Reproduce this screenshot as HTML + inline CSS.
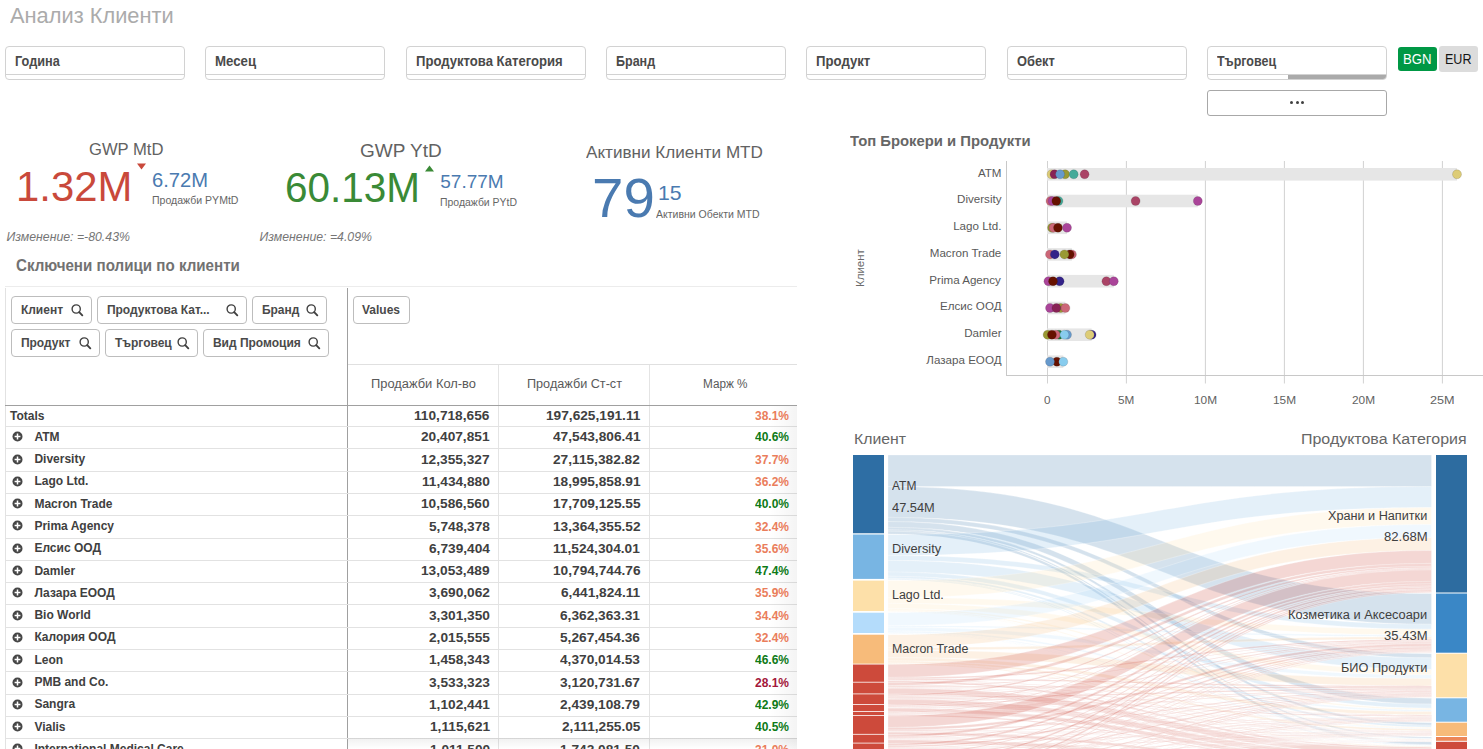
<!DOCTYPE html>
<html><head><meta charset="utf-8"><style>
html,body{margin:0;padding:0;}
body{width:1483px;height:749px;overflow:hidden;background:#fff;position:relative;font-family:"Liberation Sans",sans-serif;}
.b{position:absolute;}
.t{position:absolute;white-space:pre;line-height:1;transform-origin:0 0;}
</style></head><body>
<div class="b" style="left:5px;top:46px;width:180px;height:34px;border:1px solid #d2d2d2;border-radius:4px;box-sizing:border-box;background:#fff"></div>
<div class="b" style="left:6px;top:74px;width:178px;height:1px;background:#d2d2d2"></div>
<div class="b" style="left:205px;top:46px;width:180px;height:34px;border:1px solid #d2d2d2;border-radius:4px;box-sizing:border-box;background:#fff"></div>
<div class="b" style="left:206px;top:74px;width:178px;height:1px;background:#d2d2d2"></div>
<div class="b" style="left:406px;top:46px;width:180px;height:34px;border:1px solid #d2d2d2;border-radius:4px;box-sizing:border-box;background:#fff"></div>
<div class="b" style="left:407px;top:74px;width:178px;height:1px;background:#d2d2d2"></div>
<div class="b" style="left:606px;top:46px;width:180px;height:34px;border:1px solid #d2d2d2;border-radius:4px;box-sizing:border-box;background:#fff"></div>
<div class="b" style="left:607px;top:74px;width:178px;height:1px;background:#d2d2d2"></div>
<div class="b" style="left:806px;top:46px;width:180px;height:34px;border:1px solid #d2d2d2;border-radius:4px;box-sizing:border-box;background:#fff"></div>
<div class="b" style="left:807px;top:74px;width:178px;height:1px;background:#d2d2d2"></div>
<div class="b" style="left:1007px;top:46px;width:180px;height:34px;border:1px solid #d2d2d2;border-radius:4px;box-sizing:border-box;background:#fff"></div>
<div class="b" style="left:1008px;top:74px;width:178px;height:1px;background:#d2d2d2"></div>
<div class="b" style="left:1207px;top:46px;width:180px;height:34px;border:1px solid #d2d2d2;border-radius:4px;box-sizing:border-box;background:#fff"></div>
<div class="b" style="left:1208px;top:74px;width:178px;height:1px;background:#d2d2d2"></div>
<div class="b" style="left:1288px;top:75px;width:98px;height:3.5px;background:#aaaaaa;border-bottom-right-radius:3px"></div>
<div class="b" style="left:1207px;top:90px;width:180px;height:26px;border:1px solid #a8a8a8;border-radius:3px;box-sizing:border-box"></div>
<div class="b" style="left:1290.0px;top:100.5px;width:3px;height:3px;background:#404040;border-radius:50%"></div>
<div class="b" style="left:1295.7px;top:100.5px;width:3px;height:3px;background:#404040;border-radius:50%"></div>
<div class="b" style="left:1301.4px;top:100.5px;width:3px;height:3px;background:#404040;border-radius:50%"></div>
<div class="b" style="left:1398px;top:47px;width:39px;height:24px;background:#009845;border-radius:3px"></div>
<div class="b" style="left:1439px;top:46px;width:39px;height:26px;background:#dcdcdc;border-radius:3px"></div>
<svg class="b" style="left:136px;top:163px" width="11" height="7"><path d="M1,0.5 L10,0.5 L5.5,6.5 Z" fill="#c9493b"/></svg>
<svg class="b" style="left:424px;top:165px" width="11" height="7"><path d="M1,6.5 L10,6.5 L5.5,0.5 Z" fill="#3a8a36"/></svg>
<div class="b" style="left:5px;top:286px;width:792px;height:1px;background:#ececec"></div>
<div class="b" style="left:5px;top:288px;width:1px;height:461px;background:#e2e2e2"></div>
<div class="b" style="left:347px;top:288px;width:1px;height:461px;background:#a0a0a0"></div>
<div class="b" style="left:348px;top:364px;width:449px;height:1px;background:#e0e0e0"></div>
<div class="b" style="left:498px;top:365px;width:1px;height:384px;background:#e4e4e4"></div>
<div class="b" style="left:649px;top:365px;width:1px;height:384px;background:#e4e4e4"></div>
<div class="b" style="left:5px;top:404.5px;width:792px;height:1.5px;background:#a0a0a0"></div>
<div class="b" style="left:11px;top:296px;width:81px;height:28px;border:1px solid #bdbdbd;border-radius:4px;box-sizing:border-box"></div>
<svg class="b" style="left:71.2px;top:304px" width="14" height="14"><circle cx="5.2" cy="5" r="4.1" fill="none" stroke="#404040" stroke-width="1.4"/><path d="M8.2,8.2 L11.3,11.3" stroke="#404040" stroke-width="1.9" stroke-linecap="round"/></svg>
<div class="b" style="left:97px;top:296px;width:150px;height:28px;border:1px solid #bdbdbd;border-radius:4px;box-sizing:border-box"></div>
<svg class="b" style="left:226.2px;top:304px" width="14" height="14"><circle cx="5.2" cy="5" r="4.1" fill="none" stroke="#404040" stroke-width="1.4"/><path d="M8.2,8.2 L11.3,11.3" stroke="#404040" stroke-width="1.9" stroke-linecap="round"/></svg>
<div class="b" style="left:252px;top:296px;width:75px;height:28px;border:1px solid #bdbdbd;border-radius:4px;box-sizing:border-box"></div>
<svg class="b" style="left:306.2px;top:304px" width="14" height="14"><circle cx="5.2" cy="5" r="4.1" fill="none" stroke="#404040" stroke-width="1.4"/><path d="M8.2,8.2 L11.3,11.3" stroke="#404040" stroke-width="1.9" stroke-linecap="round"/></svg>
<div class="b" style="left:11px;top:329px;width:89px;height:28px;border:1px solid #bdbdbd;border-radius:4px;box-sizing:border-box"></div>
<svg class="b" style="left:79.2px;top:337px" width="14" height="14"><circle cx="5.2" cy="5" r="4.1" fill="none" stroke="#404040" stroke-width="1.4"/><path d="M8.2,8.2 L11.3,11.3" stroke="#404040" stroke-width="1.9" stroke-linecap="round"/></svg>
<div class="b" style="left:105px;top:329px;width:93px;height:28px;border:1px solid #bdbdbd;border-radius:4px;box-sizing:border-box"></div>
<svg class="b" style="left:177.2px;top:337px" width="14" height="14"><circle cx="5.2" cy="5" r="4.1" fill="none" stroke="#404040" stroke-width="1.4"/><path d="M8.2,8.2 L11.3,11.3" stroke="#404040" stroke-width="1.9" stroke-linecap="round"/></svg>
<div class="b" style="left:203px;top:329px;width:126px;height:28px;border:1px solid #bdbdbd;border-radius:4px;box-sizing:border-box"></div>
<svg class="b" style="left:308.2px;top:337px" width="14" height="14"><circle cx="5.2" cy="5" r="4.1" fill="none" stroke="#404040" stroke-width="1.4"/><path d="M8.2,8.2 L11.3,11.3" stroke="#404040" stroke-width="1.9" stroke-linecap="round"/></svg>
<div class="b" style="left:353px;top:296px;width:57px;height:28px;border:1px solid #bdbdbd;border-radius:4px;box-sizing:border-box"></div>
<div class="b" style="left:5px;top:426px;width:792px;height:1px;background:#e2e2e2"></div>
<div class="b" style="left:5px;top:448px;width:792px;height:1px;background:#e2e2e2"></div>
<svg class="b" style="left:12px;top:431.25px" width="11" height="11"><circle cx="5.5" cy="5.5" r="5" fill="#464646"/><path d="M5.5,2.6 V8.4 M2.6,5.5 H8.4" stroke="#fff" stroke-width="1.5"/></svg>
<div class="b" style="left:5px;top:471px;width:792px;height:1px;background:#e2e2e2"></div>
<svg class="b" style="left:12px;top:453.55px" width="11" height="11"><circle cx="5.5" cy="5.5" r="5" fill="#464646"/><path d="M5.5,2.6 V8.4 M2.6,5.5 H8.4" stroke="#fff" stroke-width="1.5"/></svg>
<div class="b" style="left:5px;top:493px;width:792px;height:1px;background:#e2e2e2"></div>
<svg class="b" style="left:12px;top:475.85px" width="11" height="11"><circle cx="5.5" cy="5.5" r="5" fill="#464646"/><path d="M5.5,2.6 V8.4 M2.6,5.5 H8.4" stroke="#fff" stroke-width="1.5"/></svg>
<div class="b" style="left:5px;top:515px;width:792px;height:1px;background:#e2e2e2"></div>
<svg class="b" style="left:12px;top:498.15px" width="11" height="11"><circle cx="5.5" cy="5.5" r="5" fill="#464646"/><path d="M5.5,2.6 V8.4 M2.6,5.5 H8.4" stroke="#fff" stroke-width="1.5"/></svg>
<div class="b" style="left:5px;top:538px;width:792px;height:1px;background:#e2e2e2"></div>
<svg class="b" style="left:12px;top:520.45px" width="11" height="11"><circle cx="5.5" cy="5.5" r="5" fill="#464646"/><path d="M5.5,2.6 V8.4 M2.6,5.5 H8.4" stroke="#fff" stroke-width="1.5"/></svg>
<div class="b" style="left:5px;top:560px;width:792px;height:1px;background:#e2e2e2"></div>
<svg class="b" style="left:12px;top:542.75px" width="11" height="11"><circle cx="5.5" cy="5.5" r="5" fill="#464646"/><path d="M5.5,2.6 V8.4 M2.6,5.5 H8.4" stroke="#fff" stroke-width="1.5"/></svg>
<div class="b" style="left:5px;top:582px;width:792px;height:1px;background:#e2e2e2"></div>
<svg class="b" style="left:12px;top:565.05px" width="11" height="11"><circle cx="5.5" cy="5.5" r="5" fill="#464646"/><path d="M5.5,2.6 V8.4 M2.6,5.5 H8.4" stroke="#fff" stroke-width="1.5"/></svg>
<div class="b" style="left:5px;top:604px;width:792px;height:1px;background:#e2e2e2"></div>
<svg class="b" style="left:12px;top:587.35px" width="11" height="11"><circle cx="5.5" cy="5.5" r="5" fill="#464646"/><path d="M5.5,2.6 V8.4 M2.6,5.5 H8.4" stroke="#fff" stroke-width="1.5"/></svg>
<div class="b" style="left:5px;top:627px;width:792px;height:1px;background:#e2e2e2"></div>
<svg class="b" style="left:12px;top:609.65px" width="11" height="11"><circle cx="5.5" cy="5.5" r="5" fill="#464646"/><path d="M5.5,2.6 V8.4 M2.6,5.5 H8.4" stroke="#fff" stroke-width="1.5"/></svg>
<div class="b" style="left:5px;top:649px;width:792px;height:1px;background:#e2e2e2"></div>
<svg class="b" style="left:12px;top:631.95px" width="11" height="11"><circle cx="5.5" cy="5.5" r="5" fill="#464646"/><path d="M5.5,2.6 V8.4 M2.6,5.5 H8.4" stroke="#fff" stroke-width="1.5"/></svg>
<div class="b" style="left:5px;top:671px;width:792px;height:1px;background:#e2e2e2"></div>
<svg class="b" style="left:12px;top:654.25px" width="11" height="11"><circle cx="5.5" cy="5.5" r="5" fill="#464646"/><path d="M5.5,2.6 V8.4 M2.6,5.5 H8.4" stroke="#fff" stroke-width="1.5"/></svg>
<div class="b" style="left:5px;top:694px;width:792px;height:1px;background:#e2e2e2"></div>
<svg class="b" style="left:12px;top:676.55px" width="11" height="11"><circle cx="5.5" cy="5.5" r="5" fill="#464646"/><path d="M5.5,2.6 V8.4 M2.6,5.5 H8.4" stroke="#fff" stroke-width="1.5"/></svg>
<div class="b" style="left:5px;top:716px;width:792px;height:1px;background:#e2e2e2"></div>
<svg class="b" style="left:12px;top:698.85px" width="11" height="11"><circle cx="5.5" cy="5.5" r="5" fill="#464646"/><path d="M5.5,2.6 V8.4 M2.6,5.5 H8.4" stroke="#fff" stroke-width="1.5"/></svg>
<div class="b" style="left:5px;top:738px;width:792px;height:1px;background:#e2e2e2"></div>
<svg class="b" style="left:12px;top:721.15px" width="11" height="11"><circle cx="5.5" cy="5.5" r="5" fill="#464646"/><path d="M5.5,2.6 V8.4 M2.6,5.5 H8.4" stroke="#fff" stroke-width="1.5"/></svg>
<svg class="b" style="left:12px;top:743.45px" width="11" height="11"><circle cx="5.5" cy="5.5" r="5" fill="#464646"/><path d="M5.5,2.6 V8.4 M2.6,5.5 H8.4" stroke="#fff" stroke-width="1.5"/></svg>
<div class="b" style="left:770px;top:406px;width:27px;height:343px;background:linear-gradient(to right,rgba(0,0,0,0),rgba(0,0,0,0.045))"></div>
<div class="b" style="left:348px;top:738px;width:449px;height:11px;background:linear-gradient(to bottom,rgba(0,0,0,0.06),rgba(0,0,0,0.0))"></div>
<svg class="b" style="left:0;top:0" width="1483" height="749">
<path d="M888,455.00 C1159.75,455.00 1159.75,455.00 1431.5,455.00 L1431.5,486.60 C1159.75,486.60 1159.75,486.60 888,486.60 Z" fill="#2e6ea4" fill-opacity="0.2" stroke="#fff" stroke-opacity="0.45" stroke-width="0.6"/>
<path d="M888,486.60 C1159.75,486.60 1159.75,593.50 1431.5,593.50 L1431.5,624.27 C1159.75,624.27 1159.75,517.36 888,517.36 Z" fill="#2e6ea4" fill-opacity="0.2" stroke="#fff" stroke-opacity="0.45" stroke-width="0.6"/>
<path d="M888,517.36 C1159.75,517.36 1159.75,653.70 1431.5,653.70 L1431.5,657.86 C1159.75,657.86 1159.75,521.52 888,521.52 Z" fill="#2e6ea4" fill-opacity="0.2" stroke="#fff" stroke-opacity="0.45" stroke-width="0.6"/>
<path d="M888,521.52 C1159.75,521.52 1159.75,698.30 1431.5,698.30 L1431.5,704.12 C1159.75,704.12 1159.75,527.34 888,527.34 Z" fill="#2e6ea4" fill-opacity="0.2" stroke="#fff" stroke-opacity="0.45" stroke-width="0.6"/>
<path d="M888,527.34 C1159.75,527.34 1159.75,722.70 1431.5,722.70 L1431.5,725.19 C1159.75,725.19 1159.75,529.84 888,529.84 Z" fill="#2e6ea4" fill-opacity="0.2" stroke="#fff" stroke-opacity="0.45" stroke-width="0.6"/>
<path d="M888,529.84 C1159.75,529.84 1159.75,737.00 1431.5,737.00 L1431.5,738.33 C1159.75,738.33 1159.75,531.17 888,531.17 Z" fill="#2e6ea4" fill-opacity="0.2" stroke="#fff" stroke-opacity="0.45" stroke-width="0.6"/>
<path d="M888,531.17 C1159.75,531.17 1159.75,741.80 1431.5,741.80 L1431.5,744.69 C1159.75,744.69 1159.75,534.06 888,534.06 Z" fill="#2e6ea4" fill-opacity="0.2" stroke="#fff" stroke-opacity="0.45" stroke-width="0.6"/>
<path d="M888,534.50 C1159.75,534.50 1159.75,486.60 1431.5,486.60 L1431.5,507.55 C1159.75,507.55 1159.75,555.45 888,555.45 Z" fill="#78b5e3" fill-opacity="0.2" stroke="#fff" stroke-opacity="0.45" stroke-width="0.6"/>
<path d="M888,555.45 C1159.75,555.45 1159.75,624.27 1431.5,624.27 L1431.5,629.25 C1159.75,629.25 1159.75,560.44 888,560.44 Z" fill="#78b5e3" fill-opacity="0.2" stroke="#fff" stroke-opacity="0.45" stroke-width="0.6"/>
<path d="M888,560.44 C1159.75,560.44 1159.75,657.86 1431.5,657.86 L1431.5,669.50 C1159.75,669.50 1159.75,572.08 888,572.08 Z" fill="#78b5e3" fill-opacity="0.2" stroke="#fff" stroke-opacity="0.45" stroke-width="0.6"/>
<path d="M888,572.08 C1159.75,572.08 1159.75,704.12 1431.5,704.12 L1431.5,708.28 C1159.75,708.28 1159.75,576.24 888,576.24 Z" fill="#78b5e3" fill-opacity="0.2" stroke="#fff" stroke-opacity="0.45" stroke-width="0.6"/>
<path d="M888,576.24 C1159.75,576.24 1159.75,725.19 1431.5,725.19 L1431.5,727.19 C1159.75,727.19 1159.75,578.24 888,578.24 Z" fill="#78b5e3" fill-opacity="0.2" stroke="#fff" stroke-opacity="0.45" stroke-width="0.6"/>
<path d="M888,578.24 C1159.75,578.24 1159.75,738.33 1431.5,738.33 L1431.5,739.00 C1159.75,739.00 1159.75,578.90 888,578.90 Z" fill="#78b5e3" fill-opacity="0.2" stroke="#fff" stroke-opacity="0.45" stroke-width="0.6"/>
<path d="M888,578.90 C1159.75,578.90 1159.75,744.69 1431.5,744.69 L1431.5,745.49 C1159.75,745.49 1159.75,579.70 888,579.70 Z" fill="#78b5e3" fill-opacity="0.2" stroke="#fff" stroke-opacity="0.45" stroke-width="0.6"/>
<path d="M888,580.60 C1159.75,580.60 1159.75,507.55 1431.5,507.55 L1431.5,524.51 C1159.75,524.51 1159.75,597.56 888,597.56 Z" fill="#fde0a9" fill-opacity="0.2" stroke="#fff" stroke-opacity="0.45" stroke-width="0.6"/>
<path d="M888,597.56 C1159.75,597.56 1159.75,629.25 1431.5,629.25 L1431.5,635.08 C1159.75,635.08 1159.75,603.38 888,603.38 Z" fill="#fde0a9" fill-opacity="0.2" stroke="#fff" stroke-opacity="0.45" stroke-width="0.6"/>
<path d="M888,603.38 C1159.75,603.38 1159.75,669.50 1431.5,669.50 L1431.5,674.82 C1159.75,674.82 1159.75,608.70 888,608.70 Z" fill="#fde0a9" fill-opacity="0.2" stroke="#fff" stroke-opacity="0.45" stroke-width="0.6"/>
<path d="M888,608.70 C1159.75,608.70 1159.75,708.28 1431.5,708.28 L1431.5,709.94 C1159.75,709.94 1159.75,610.37 888,610.37 Z" fill="#fde0a9" fill-opacity="0.2" stroke="#fff" stroke-opacity="0.45" stroke-width="0.6"/>
<path d="M888,610.37 C1159.75,610.37 1159.75,727.19 1431.5,727.19 L1431.5,728.19 C1159.75,728.19 1159.75,611.37 888,611.37 Z" fill="#fde0a9" fill-opacity="0.2" stroke="#fff" stroke-opacity="0.45" stroke-width="0.6"/>
<path d="M888,611.37 C1159.75,611.37 1159.75,739.00 1431.5,739.00 L1431.5,739.16 C1159.75,739.16 1159.75,611.53 888,611.53 Z" fill="#fde0a9" fill-opacity="0.2" stroke="#fff" stroke-opacity="0.45" stroke-width="0.6"/>
<path d="M888,611.53 C1159.75,611.53 1159.75,745.49 1431.5,745.49 L1431.5,745.82 C1159.75,745.82 1159.75,611.86 888,611.86 Z" fill="#fde0a9" fill-opacity="0.2" stroke="#fff" stroke-opacity="0.45" stroke-width="0.6"/>
<path d="M888,612.70 C1159.75,612.70 1159.75,524.51 1431.5,524.51 L1431.5,537.48 C1159.75,537.48 1159.75,625.67 888,625.67 Z" fill="#b4dcfb" fill-opacity="0.2" stroke="#fff" stroke-opacity="0.45" stroke-width="0.6"/>
<path d="M888,625.67 C1159.75,625.67 1159.75,635.08 1431.5,635.08 L1431.5,636.74 C1159.75,636.74 1159.75,627.33 888,627.33 Z" fill="#b4dcfb" fill-opacity="0.2" stroke="#fff" stroke-opacity="0.45" stroke-width="0.6"/>
<path d="M888,627.33 C1159.75,627.33 1159.75,674.82 1431.5,674.82 L1431.5,678.48 C1159.75,678.48 1159.75,630.99 888,630.99 Z" fill="#b4dcfb" fill-opacity="0.2" stroke="#fff" stroke-opacity="0.45" stroke-width="0.6"/>
<path d="M888,630.99 C1159.75,630.99 1159.75,709.94 1431.5,709.94 L1431.5,711.60 C1159.75,711.60 1159.75,632.66 888,632.66 Z" fill="#b4dcfb" fill-opacity="0.2" stroke="#fff" stroke-opacity="0.45" stroke-width="0.6"/>
<path d="M888,632.66 C1159.75,632.66 1159.75,728.19 1431.5,728.19 L1431.5,728.85 C1159.75,728.85 1159.75,633.32 888,633.32 Z" fill="#b4dcfb" fill-opacity="0.2" stroke="#fff" stroke-opacity="0.45" stroke-width="0.6"/>
<path d="M888,633.32 C1159.75,633.32 1159.75,739.16 1431.5,739.16 L1431.5,739.33 C1159.75,739.33 1159.75,633.49 888,633.49 Z" fill="#b4dcfb" fill-opacity="0.2" stroke="#fff" stroke-opacity="0.45" stroke-width="0.6"/>
<path d="M888,633.49 C1159.75,633.49 1159.75,745.82 1431.5,745.82 L1431.5,746.16 C1159.75,746.16 1159.75,633.82 888,633.82 Z" fill="#b4dcfb" fill-opacity="0.2" stroke="#fff" stroke-opacity="0.45" stroke-width="0.6"/>
<path d="M888,634.70 C1159.75,634.70 1159.75,537.48 1431.5,537.48 L1431.5,550.46 C1159.75,550.46 1159.75,647.67 888,647.67 Z" fill="#f7bb7a" fill-opacity="0.2" stroke="#fff" stroke-opacity="0.45" stroke-width="0.6"/>
<path d="M888,647.67 C1159.75,647.67 1159.75,636.74 1431.5,636.74 L1431.5,639.23 C1159.75,639.23 1159.75,650.17 888,650.17 Z" fill="#f7bb7a" fill-opacity="0.2" stroke="#fff" stroke-opacity="0.45" stroke-width="0.6"/>
<path d="M888,650.17 C1159.75,650.17 1159.75,678.48 1431.5,678.48 L1431.5,685.96 C1159.75,685.96 1159.75,657.65 888,657.65 Z" fill="#f7bb7a" fill-opacity="0.2" stroke="#fff" stroke-opacity="0.45" stroke-width="0.6"/>
<path d="M888,657.65 C1159.75,657.65 1159.75,711.60 1431.5,711.60 L1431.5,714.93 C1159.75,714.93 1159.75,660.98 888,660.98 Z" fill="#f7bb7a" fill-opacity="0.2" stroke="#fff" stroke-opacity="0.45" stroke-width="0.6"/>
<path d="M888,660.98 C1159.75,660.98 1159.75,728.85 1431.5,728.85 L1431.5,730.85 C1159.75,730.85 1159.75,662.97 888,662.97 Z" fill="#f7bb7a" fill-opacity="0.2" stroke="#fff" stroke-opacity="0.45" stroke-width="0.6"/>
<path d="M888,662.97 C1159.75,662.97 1159.75,739.33 1431.5,739.33 L1431.5,739.83 C1159.75,739.83 1159.75,663.47 888,663.47 Z" fill="#f7bb7a" fill-opacity="0.2" stroke="#fff" stroke-opacity="0.45" stroke-width="0.6"/>
<path d="M888,663.47 C1159.75,663.47 1159.75,746.16 1431.5,746.16 L1431.5,747.15 C1159.75,747.15 1159.75,664.47 888,664.47 Z" fill="#f7bb7a" fill-opacity="0.2" stroke="#fff" stroke-opacity="0.45" stroke-width="0.6"/>
<path d="M888,664.50 C1159.75,664.50 1159.75,550.46 1431.5,550.46 L1431.5,563.40 C1159.75,563.40 1159.75,677.44 888,677.44 Z" fill="#cd4a3b" fill-opacity="0.22" stroke="#fff" stroke-opacity="0.45" stroke-width="0.6"/>
<path d="M888,677.44 C1159.75,677.44 1159.75,639.23 1431.5,639.23 L1431.5,640.59 C1159.75,640.59 1159.75,678.80 888,678.80 Z" fill="#cd4a3b" fill-opacity="0.22" stroke="#fff" stroke-opacity="0.45" stroke-width="0.6"/>
<path d="M888,678.80 C1159.75,678.80 1159.75,685.96 1431.5,685.96 L1431.5,687.27 C1159.75,687.27 1159.75,680.11 888,680.11 Z" fill="#cd4a3b" fill-opacity="0.22" stroke="#fff" stroke-opacity="0.45" stroke-width="0.6"/>
<path d="M888,680.11 C1159.75,680.11 1159.75,714.93 1431.5,714.93 L1431.5,715.23 C1159.75,715.23 1159.75,680.41 888,680.41 Z" fill="#cd4a3b" fill-opacity="0.22" stroke="#fff" stroke-opacity="0.45" stroke-width="0.6"/>
<path d="M888,680.41 C1159.75,680.41 1159.75,730.85 1431.5,730.85 L1431.5,731.25 C1159.75,731.25 1159.75,680.81 888,680.81 Z" fill="#cd4a3b" fill-opacity="0.22" stroke="#fff" stroke-opacity="0.45" stroke-width="0.6"/>
<path d="M888,680.81 C1159.75,680.81 1159.75,739.83 1431.5,739.83 L1431.5,739.93 C1159.75,739.93 1159.75,680.91 888,680.91 Z" fill="#cd4a3b" fill-opacity="0.22" stroke="#fff" stroke-opacity="0.45" stroke-width="0.6"/>
<path d="M888,680.91 C1159.75,680.91 1159.75,747.15 1431.5,747.15 L1431.5,748.83 C1159.75,748.83 1159.75,682.59 888,682.59 Z" fill="#cd4a3b" fill-opacity="0.22" stroke="#fff" stroke-opacity="0.45" stroke-width="0.6"/>
<path d="M888,682.59 C1159.75,682.59 1159.75,563.40 1431.5,563.40 L1431.5,566.35 C1159.75,566.35 1159.75,685.54 888,685.54 Z" fill="#cd4a3b" fill-opacity="0.22" stroke="#fff" stroke-opacity="0.45" stroke-width="0.6"/>
<path d="M888,685.54 C1159.75,685.54 1159.75,640.59 1431.5,640.59 L1431.5,641.26 C1159.75,641.26 1159.75,686.21 888,686.21 Z" fill="#cd4a3b" fill-opacity="0.22" stroke="#fff" stroke-opacity="0.45" stroke-width="0.6"/>
<path d="M888,686.21 C1159.75,686.21 1159.75,687.27 1431.5,687.27 L1431.5,688.45 C1159.75,688.45 1159.75,687.40 888,687.40 Z" fill="#cd4a3b" fill-opacity="0.22" stroke="#fff" stroke-opacity="0.45" stroke-width="0.6"/>
<path d="M888,687.40 C1159.75,687.40 1159.75,715.23 1431.5,715.23 L1431.5,715.67 C1159.75,715.67 1159.75,687.84 888,687.84 Z" fill="#cd4a3b" fill-opacity="0.22" stroke="#fff" stroke-opacity="0.45" stroke-width="0.6"/>
<path d="M888,687.84 C1159.75,687.84 1159.75,731.25 1431.5,731.25 L1431.5,731.60 C1159.75,731.60 1159.75,688.18 888,688.18 Z" fill="#cd4a3b" fill-opacity="0.22" stroke="#fff" stroke-opacity="0.45" stroke-width="0.6"/>
<path d="M888,688.18 C1159.75,688.18 1159.75,739.93 1431.5,739.93 L1431.5,740.09 C1159.75,740.09 1159.75,688.35 888,688.35 Z" fill="#cd4a3b" fill-opacity="0.22" stroke="#fff" stroke-opacity="0.45" stroke-width="0.6"/>
<path d="M888,688.35 C1159.75,688.35 1159.75,748.83 1431.5,748.83 L1431.5,754.78 C1159.75,754.78 1159.75,694.30 888,694.30 Z" fill="#cd4a3b" fill-opacity="0.22" stroke="#fff" stroke-opacity="0.45" stroke-width="0.6"/>
<path d="M888,694.30 C1159.75,694.30 1159.75,566.35 1431.5,566.35 L1431.5,567.88 C1159.75,567.88 1159.75,695.83 888,695.83 Z" fill="#cd4a3b" fill-opacity="0.22" stroke="#fff" stroke-opacity="0.45" stroke-width="0.6"/>
<path d="M888,695.83 C1159.75,695.83 1159.75,641.26 1431.5,641.26 L1431.5,642.01 C1159.75,642.01 1159.75,696.58 888,696.58 Z" fill="#cd4a3b" fill-opacity="0.22" stroke="#fff" stroke-opacity="0.45" stroke-width="0.6"/>
<path d="M888,696.58 C1159.75,696.58 1159.75,688.45 1431.5,688.45 L1431.5,689.65 C1159.75,689.65 1159.75,697.77 888,697.77 Z" fill="#cd4a3b" fill-opacity="0.22" stroke="#fff" stroke-opacity="0.45" stroke-width="0.6"/>
<path d="M888,697.77 C1159.75,697.77 1159.75,715.67 1431.5,715.67 L1431.5,716.61 C1159.75,716.61 1159.75,698.71 888,698.71 Z" fill="#cd4a3b" fill-opacity="0.22" stroke="#fff" stroke-opacity="0.45" stroke-width="0.6"/>
<path d="M888,698.71 C1159.75,698.71 1159.75,731.60 1431.5,731.60 L1431.5,732.12 C1159.75,732.12 1159.75,699.23 888,699.23 Z" fill="#cd4a3b" fill-opacity="0.22" stroke="#fff" stroke-opacity="0.45" stroke-width="0.6"/>
<path d="M888,699.23 C1159.75,699.23 1159.75,740.09 1431.5,740.09 L1431.5,740.22 C1159.75,740.22 1159.75,699.37 888,699.37 Z" fill="#cd4a3b" fill-opacity="0.22" stroke="#fff" stroke-opacity="0.45" stroke-width="0.6"/>
<path d="M888,699.37 C1159.75,699.37 1159.75,754.78 1431.5,754.78 L1431.5,760.31 C1159.75,760.31 1159.75,704.89 888,704.89 Z" fill="#cd4a3b" fill-opacity="0.22" stroke="#fff" stroke-opacity="0.45" stroke-width="0.6"/>
<path d="M888,704.89 C1159.75,704.89 1159.75,567.88 1431.5,567.88 L1431.5,568.88 C1159.75,568.88 1159.75,705.89 888,705.89 Z" fill="#cd4a3b" fill-opacity="0.22" stroke="#fff" stroke-opacity="0.45" stroke-width="0.6"/>
<path d="M888,705.89 C1159.75,705.89 1159.75,642.01 1431.5,642.01 L1431.5,643.06 C1159.75,643.06 1159.75,706.95 888,706.95 Z" fill="#cd4a3b" fill-opacity="0.22" stroke="#fff" stroke-opacity="0.45" stroke-width="0.6"/>
<path d="M888,706.95 C1159.75,706.95 1159.75,689.65 1431.5,689.65 L1431.5,690.27 C1159.75,690.27 1159.75,707.58 888,707.58 Z" fill="#cd4a3b" fill-opacity="0.22" stroke="#fff" stroke-opacity="0.45" stroke-width="0.6"/>
<path d="M888,707.58 C1159.75,707.58 1159.75,716.61 1431.5,716.61 L1431.5,716.93 C1159.75,716.93 1159.75,707.89 888,707.89 Z" fill="#cd4a3b" fill-opacity="0.22" stroke="#fff" stroke-opacity="0.45" stroke-width="0.6"/>
<path d="M888,707.89 C1159.75,707.89 1159.75,732.12 1431.5,732.12 L1431.5,732.35 C1159.75,732.35 1159.75,708.12 888,708.12 Z" fill="#cd4a3b" fill-opacity="0.22" stroke="#fff" stroke-opacity="0.45" stroke-width="0.6"/>
<path d="M888,708.12 C1159.75,708.12 1159.75,740.22 1431.5,740.22 L1431.5,740.31 C1159.75,740.31 1159.75,708.20 888,708.20 Z" fill="#cd4a3b" fill-opacity="0.22" stroke="#fff" stroke-opacity="0.45" stroke-width="0.6"/>
<path d="M888,708.20 C1159.75,708.20 1159.75,760.31 1431.5,760.31 L1431.5,764.00 C1159.75,764.00 1159.75,711.89 888,711.89 Z" fill="#cd4a3b" fill-opacity="0.22" stroke="#fff" stroke-opacity="0.45" stroke-width="0.6"/>
<path d="M888,711.90 C1159.75,711.90 1159.75,568.88 1431.5,568.88 L1431.5,569.82 C1159.75,569.82 1159.75,712.84 888,712.84 Z" fill="#cd4a3b" fill-opacity="0.22" stroke="#fff" stroke-opacity="0.45" stroke-width="0.6"/>
<path d="M888,712.84 C1159.75,712.84 1159.75,643.06 1431.5,643.06 L1431.5,643.70 C1159.75,643.70 1159.75,713.47 888,713.47 Z" fill="#cd4a3b" fill-opacity="0.22" stroke="#fff" stroke-opacity="0.45" stroke-width="0.6"/>
<path d="M888,713.47 C1159.75,713.47 1159.75,690.27 1431.5,690.27 L1431.5,690.96 C1159.75,690.96 1159.75,714.16 888,714.16 Z" fill="#cd4a3b" fill-opacity="0.22" stroke="#fff" stroke-opacity="0.45" stroke-width="0.6"/>
<path d="M888,714.16 C1159.75,714.16 1159.75,716.93 1431.5,716.93 L1431.5,717.25 C1159.75,717.25 1159.75,714.48 888,714.48 Z" fill="#cd4a3b" fill-opacity="0.22" stroke="#fff" stroke-opacity="0.45" stroke-width="0.6"/>
<path d="M888,714.48 C1159.75,714.48 1159.75,732.35 1431.5,732.35 L1431.5,732.63 C1159.75,732.63 1159.75,714.77 888,714.77 Z" fill="#cd4a3b" fill-opacity="0.22" stroke="#fff" stroke-opacity="0.45" stroke-width="0.6"/>
<path d="M888,714.82 C1159.75,714.82 1159.75,764.00 1431.5,764.00 L1431.5,765.19 C1159.75,765.19 1159.75,716.00 888,716.00 Z" fill="#cd4a3b" fill-opacity="0.22" stroke="#fff" stroke-opacity="0.45" stroke-width="0.6"/>
<path d="M888,716.00 C1159.75,716.00 1159.75,569.82 1431.5,569.82 L1431.5,581.36 C1159.75,581.36 1159.75,727.54 888,727.54 Z" fill="#cd4a3b" fill-opacity="0.22" stroke="#fff" stroke-opacity="0.45" stroke-width="0.6"/>
<path d="M888,727.54 C1159.75,727.54 1159.75,643.70 1431.5,643.70 L1431.5,646.26 C1159.75,646.26 1159.75,730.10 888,730.10 Z" fill="#cd4a3b" fill-opacity="0.22" stroke="#fff" stroke-opacity="0.45" stroke-width="0.6"/>
<path d="M888,730.10 C1159.75,730.10 1159.75,690.96 1431.5,690.96 L1431.5,692.05 C1159.75,692.05 1159.75,731.19 888,731.19 Z" fill="#cd4a3b" fill-opacity="0.22" stroke="#fff" stroke-opacity="0.45" stroke-width="0.6"/>
<path d="M888,731.19 C1159.75,731.19 1159.75,717.25 1431.5,717.25 L1431.5,717.69 C1159.75,717.69 1159.75,731.63 888,731.63 Z" fill="#cd4a3b" fill-opacity="0.22" stroke="#fff" stroke-opacity="0.45" stroke-width="0.6"/>
<path d="M888,731.63 C1159.75,731.63 1159.75,732.63 1431.5,732.63 L1431.5,733.07 C1159.75,733.07 1159.75,732.07 888,732.07 Z" fill="#cd4a3b" fill-opacity="0.22" stroke="#fff" stroke-opacity="0.45" stroke-width="0.6"/>
<path d="M888,732.07 C1159.75,732.07 1159.75,740.36 1431.5,740.36 L1431.5,740.48 C1159.75,740.48 1159.75,732.19 888,732.19 Z" fill="#cd4a3b" fill-opacity="0.22" stroke="#fff" stroke-opacity="0.45" stroke-width="0.6"/>
<path d="M888,732.19 C1159.75,732.19 1159.75,765.19 1431.5,765.19 L1431.5,767.69 C1159.75,767.69 1159.75,734.69 888,734.69 Z" fill="#cd4a3b" fill-opacity="0.22" stroke="#fff" stroke-opacity="0.45" stroke-width="0.6"/>
<path d="M888,734.70 C1159.75,734.70 1159.75,581.36 1431.5,581.36 L1431.5,583.84 C1159.75,583.84 1159.75,737.18 888,737.18 Z" fill="#cd4a3b" fill-opacity="0.22" stroke="#fff" stroke-opacity="0.45" stroke-width="0.6"/>
<path d="M888,737.18 C1159.75,737.18 1159.75,646.26 1431.5,646.26 L1431.5,647.24 C1159.75,647.24 1159.75,738.16 888,738.16 Z" fill="#cd4a3b" fill-opacity="0.22" stroke="#fff" stroke-opacity="0.45" stroke-width="0.6"/>
<path d="M888,738.16 C1159.75,738.16 1159.75,692.05 1431.5,692.05 L1431.5,692.67 C1159.75,692.67 1159.75,738.78 888,738.78 Z" fill="#cd4a3b" fill-opacity="0.22" stroke="#fff" stroke-opacity="0.45" stroke-width="0.6"/>
<path d="M888,738.78 C1159.75,738.78 1159.75,717.69 1431.5,717.69 L1431.5,718.24 C1159.75,718.24 1159.75,739.33 888,739.33 Z" fill="#cd4a3b" fill-opacity="0.22" stroke="#fff" stroke-opacity="0.45" stroke-width="0.6"/>
<path d="M888,739.33 C1159.75,739.33 1159.75,733.07 1431.5,733.07 L1431.5,733.47 C1159.75,733.47 1159.75,739.72 888,739.72 Z" fill="#cd4a3b" fill-opacity="0.22" stroke="#fff" stroke-opacity="0.45" stroke-width="0.6"/>
<path d="M888,739.72 C1159.75,739.72 1159.75,740.48 1431.5,740.48 L1431.5,740.64 C1159.75,740.64 1159.75,739.88 888,739.88 Z" fill="#cd4a3b" fill-opacity="0.22" stroke="#fff" stroke-opacity="0.45" stroke-width="0.6"/>
<path d="M888,739.88 C1159.75,739.88 1159.75,767.69 1431.5,767.69 L1431.5,771.31 C1159.75,771.31 1159.75,743.49 888,743.49 Z" fill="#cd4a3b" fill-opacity="0.22" stroke="#fff" stroke-opacity="0.45" stroke-width="0.6"/>
<path d="M888,743.49 C1159.75,743.49 1159.75,583.84 1431.5,583.84 L1431.5,585.95 C1159.75,585.95 1159.75,745.60 888,745.60 Z" fill="#cd4a3b" fill-opacity="0.22" stroke="#fff" stroke-opacity="0.45" stroke-width="0.6"/>
<path d="M888,745.60 C1159.75,745.60 1159.75,647.24 1431.5,647.24 L1431.5,648.92 C1159.75,648.92 1159.75,747.28 888,747.28 Z" fill="#cd4a3b" fill-opacity="0.22" stroke="#fff" stroke-opacity="0.45" stroke-width="0.6"/>
<path d="M888,747.28 C1159.75,747.28 1159.75,692.67 1431.5,692.67 L1431.5,693.38 C1159.75,693.38 1159.75,747.99 888,747.99 Z" fill="#cd4a3b" fill-opacity="0.22" stroke="#fff" stroke-opacity="0.45" stroke-width="0.6"/>
<path d="M888,747.99 C1159.75,747.99 1159.75,718.24 1431.5,718.24 L1431.5,718.89 C1159.75,718.89 1159.75,748.65 888,748.65 Z" fill="#cd4a3b" fill-opacity="0.22" stroke="#fff" stroke-opacity="0.45" stroke-width="0.6"/>
<path d="M888,748.65 C1159.75,748.65 1159.75,733.47 1431.5,733.47 L1431.5,734.13 C1159.75,734.13 1159.75,749.32 888,749.32 Z" fill="#cd4a3b" fill-opacity="0.22" stroke="#fff" stroke-opacity="0.45" stroke-width="0.6"/>
<path d="M888,749.32 C1159.75,749.32 1159.75,740.64 1431.5,740.64 L1431.5,740.74 C1159.75,740.74 1159.75,749.42 888,749.42 Z" fill="#cd4a3b" fill-opacity="0.22" stroke="#fff" stroke-opacity="0.45" stroke-width="0.6"/>
<path d="M888,749.42 C1159.75,749.42 1159.75,771.31 1431.5,771.31 L1431.5,775.35 C1159.75,775.35 1159.75,753.47 888,753.47 Z" fill="#cd4a3b" fill-opacity="0.22" stroke="#fff" stroke-opacity="0.45" stroke-width="0.6"/>
<path d="M888,753.47 C1159.75,753.47 1159.75,585.95 1431.5,585.95 L1431.5,587.06 C1159.75,587.06 1159.75,754.59 888,754.59 Z" fill="#cd4a3b" fill-opacity="0.22" stroke="#fff" stroke-opacity="0.45" stroke-width="0.6"/>
<path d="M888,754.59 C1159.75,754.59 1159.75,648.92 1431.5,648.92 L1431.5,649.94 C1159.75,649.94 1159.75,755.61 888,755.61 Z" fill="#cd4a3b" fill-opacity="0.22" stroke="#fff" stroke-opacity="0.45" stroke-width="0.6"/>
<path d="M888,755.61 C1159.75,755.61 1159.75,693.38 1431.5,693.38 L1431.5,694.52 C1159.75,694.52 1159.75,756.74 888,756.74 Z" fill="#cd4a3b" fill-opacity="0.22" stroke="#fff" stroke-opacity="0.45" stroke-width="0.6"/>
<path d="M888,756.74 C1159.75,756.74 1159.75,718.89 1431.5,718.89 L1431.5,719.48 C1159.75,719.48 1159.75,757.33 888,757.33 Z" fill="#cd4a3b" fill-opacity="0.22" stroke="#fff" stroke-opacity="0.45" stroke-width="0.6"/>
<path d="M888,757.33 C1159.75,757.33 1159.75,734.13 1431.5,734.13 L1431.5,734.70 C1159.75,734.70 1159.75,757.90 888,757.90 Z" fill="#cd4a3b" fill-opacity="0.22" stroke="#fff" stroke-opacity="0.45" stroke-width="0.6"/>
<path d="M888,757.90 C1159.75,757.90 1159.75,740.74 1431.5,740.74 L1431.5,740.84 C1159.75,740.84 1159.75,758.00 888,758.00 Z" fill="#cd4a3b" fill-opacity="0.22" stroke="#fff" stroke-opacity="0.45" stroke-width="0.6"/>
<path d="M888,758.00 C1159.75,758.00 1159.75,775.35 1431.5,775.35 L1431.5,779.14 C1159.75,779.14 1159.75,761.78 888,761.78 Z" fill="#cd4a3b" fill-opacity="0.22" stroke="#fff" stroke-opacity="0.45" stroke-width="0.6"/>
<path d="M888,761.79 C1159.75,761.79 1159.75,587.06 1431.5,587.06 L1431.5,588.90 C1159.75,588.90 1159.75,763.62 888,763.62 Z" fill="#cd4a3b" fill-opacity="0.22" stroke="#fff" stroke-opacity="0.45" stroke-width="0.6"/>
<path d="M888,763.62 C1159.75,763.62 1159.75,649.94 1431.5,649.94 L1431.5,650.71 C1159.75,650.71 1159.75,764.40 888,764.40 Z" fill="#cd4a3b" fill-opacity="0.22" stroke="#fff" stroke-opacity="0.45" stroke-width="0.6"/>
<path d="M888,764.40 C1159.75,764.40 1159.75,694.52 1431.5,694.52 L1431.5,695.21 C1159.75,695.21 1159.75,765.09 888,765.09 Z" fill="#cd4a3b" fill-opacity="0.22" stroke="#fff" stroke-opacity="0.45" stroke-width="0.6"/>
<path d="M888,765.09 C1159.75,765.09 1159.75,719.48 1431.5,719.48 L1431.5,720.08 C1159.75,720.08 1159.75,765.69 888,765.69 Z" fill="#cd4a3b" fill-opacity="0.22" stroke="#fff" stroke-opacity="0.45" stroke-width="0.6"/>
<path d="M888,765.69 C1159.75,765.69 1159.75,734.70 1431.5,734.70 L1431.5,735.18 C1159.75,735.18 1159.75,766.17 888,766.17 Z" fill="#cd4a3b" fill-opacity="0.22" stroke="#fff" stroke-opacity="0.45" stroke-width="0.6"/>
<path d="M888,766.17 C1159.75,766.17 1159.75,740.84 1431.5,740.84 L1431.5,740.94 C1159.75,740.94 1159.75,766.27 888,766.27 Z" fill="#cd4a3b" fill-opacity="0.22" stroke="#fff" stroke-opacity="0.45" stroke-width="0.6"/>
<path d="M888,766.27 C1159.75,766.27 1159.75,779.14 1431.5,779.14 L1431.5,782.14 C1159.75,782.14 1159.75,769.27 888,769.27 Z" fill="#cd4a3b" fill-opacity="0.22" stroke="#fff" stroke-opacity="0.45" stroke-width="0.6"/>
<path d="M888,769.27 C1159.75,769.27 1159.75,588.90 1431.5,588.90 L1431.5,589.93 C1159.75,589.93 1159.75,770.30 888,770.30 Z" fill="#cd4a3b" fill-opacity="0.22" stroke="#fff" stroke-opacity="0.45" stroke-width="0.6"/>
<path d="M888,770.30 C1159.75,770.30 1159.75,650.71 1431.5,650.71 L1431.5,651.65 C1159.75,651.65 1159.75,771.23 888,771.23 Z" fill="#cd4a3b" fill-opacity="0.22" stroke="#fff" stroke-opacity="0.45" stroke-width="0.6"/>
<path d="M888,771.23 C1159.75,771.23 1159.75,695.21 1431.5,695.21 L1431.5,696.12 C1159.75,696.12 1159.75,772.14 888,772.14 Z" fill="#cd4a3b" fill-opacity="0.22" stroke="#fff" stroke-opacity="0.45" stroke-width="0.6"/>
<path d="M888,772.14 C1159.75,772.14 1159.75,720.08 1431.5,720.08 L1431.5,720.81 C1159.75,720.81 1159.75,772.87 888,772.87 Z" fill="#cd4a3b" fill-opacity="0.22" stroke="#fff" stroke-opacity="0.45" stroke-width="0.6"/>
<path d="M888,772.87 C1159.75,772.87 1159.75,735.18 1431.5,735.18 L1431.5,735.66 C1159.75,735.66 1159.75,773.35 888,773.35 Z" fill="#cd4a3b" fill-opacity="0.22" stroke="#fff" stroke-opacity="0.45" stroke-width="0.6"/>
<path d="M888,773.35 C1159.75,773.35 1159.75,740.94 1431.5,740.94 L1431.5,741.03 C1159.75,741.03 1159.75,773.44 888,773.44 Z" fill="#cd4a3b" fill-opacity="0.22" stroke="#fff" stroke-opacity="0.45" stroke-width="0.6"/>
<path d="M888,773.44 C1159.75,773.44 1159.75,782.14 1431.5,782.14 L1431.5,784.62 C1159.75,784.62 1159.75,775.92 888,775.92 Z" fill="#cd4a3b" fill-opacity="0.22" stroke="#fff" stroke-opacity="0.45" stroke-width="0.6"/>
<path d="M888,775.92 C1159.75,775.92 1159.75,589.93 1431.5,589.93 L1431.5,591.59 C1159.75,591.59 1159.75,777.59 888,777.59 Z" fill="#cd4a3b" fill-opacity="0.22" stroke="#fff" stroke-opacity="0.45" stroke-width="0.6"/>
<path d="M888,777.59 C1159.75,777.59 1159.75,651.65 1431.5,651.65 L1431.5,651.96 C1159.75,651.96 1159.75,777.90 888,777.90 Z" fill="#cd4a3b" fill-opacity="0.22" stroke="#fff" stroke-opacity="0.45" stroke-width="0.6"/>
<path d="M888,777.90 C1159.75,777.90 1159.75,696.12 1431.5,696.12 L1431.5,696.72 C1159.75,696.72 1159.75,778.50 888,778.50 Z" fill="#cd4a3b" fill-opacity="0.22" stroke="#fff" stroke-opacity="0.45" stroke-width="0.6"/>
<path d="M888,778.50 C1159.75,778.50 1159.75,720.81 1431.5,720.81 L1431.5,721.06 C1159.75,721.06 1159.75,778.75 888,778.75 Z" fill="#cd4a3b" fill-opacity="0.22" stroke="#fff" stroke-opacity="0.45" stroke-width="0.6"/>
<path d="M888,778.75 C1159.75,778.75 1159.75,735.66 1431.5,735.66 L1431.5,735.84 C1159.75,735.84 1159.75,778.92 888,778.92 Z" fill="#cd4a3b" fill-opacity="0.22" stroke="#fff" stroke-opacity="0.45" stroke-width="0.6"/>
<path d="M888,778.97 C1159.75,778.97 1159.75,784.62 1431.5,784.62 L1431.5,787.39 C1159.75,787.39 1159.75,781.74 888,781.74 Z" fill="#cd4a3b" fill-opacity="0.22" stroke="#fff" stroke-opacity="0.45" stroke-width="0.6"/>
<path d="M888,781.74 C1159.75,781.74 1159.75,591.59 1431.5,591.59 L1431.5,592.50 C1159.75,592.50 1159.75,782.64 888,782.64 Z" fill="#cd4a3b" fill-opacity="0.22" stroke="#fff" stroke-opacity="0.45" stroke-width="0.6"/>
<path d="M888,782.64 C1159.75,782.64 1159.75,651.96 1431.5,651.96 L1431.5,652.42 C1159.75,652.42 1159.75,783.10 888,783.10 Z" fill="#cd4a3b" fill-opacity="0.22" stroke="#fff" stroke-opacity="0.45" stroke-width="0.6"/>
<path d="M888,783.10 C1159.75,783.10 1159.75,696.72 1431.5,696.72 L1431.5,697.27 C1159.75,697.27 1159.75,783.65 888,783.65 Z" fill="#cd4a3b" fill-opacity="0.22" stroke="#fff" stroke-opacity="0.45" stroke-width="0.6"/>
<path d="M888,783.65 C1159.75,783.65 1159.75,721.06 1431.5,721.06 L1431.5,721.58 C1159.75,721.58 1159.75,784.18 888,784.18 Z" fill="#cd4a3b" fill-opacity="0.22" stroke="#fff" stroke-opacity="0.45" stroke-width="0.6"/>
<path d="M888,784.18 C1159.75,784.18 1159.75,735.84 1431.5,735.84 L1431.5,736.00 C1159.75,736.00 1159.75,784.34 888,784.34 Z" fill="#cd4a3b" fill-opacity="0.22" stroke="#fff" stroke-opacity="0.45" stroke-width="0.6"/>
<path d="M888,784.34 C1159.75,784.34 1159.75,741.08 1431.5,741.08 L1431.5,741.16 C1159.75,741.16 1159.75,784.42 888,784.42 Z" fill="#cd4a3b" fill-opacity="0.22" stroke="#fff" stroke-opacity="0.45" stroke-width="0.6"/>
<path d="M888,784.42 C1159.75,784.42 1159.75,787.39 1431.5,787.39 L1431.5,789.69 C1159.75,789.69 1159.75,786.73 888,786.73 Z" fill="#cd4a3b" fill-opacity="0.22" stroke="#fff" stroke-opacity="0.45" stroke-width="0.6"/>
<rect x="853" y="455.00" width="31" height="78.26" fill="#2e6ea4"/>
<rect x="853" y="534.50" width="31" height="44.40" fill="#78b5e3"/>
<rect x="853" y="580.60" width="31" height="30.46" fill="#fde0a9"/>
<rect x="853" y="612.70" width="31" height="20.32" fill="#b4dcfb"/>
<rect x="853" y="634.70" width="31" height="28.97" fill="#f7bb7a"/>
<rect x="853" y="664.50" width="31" height="17.29" fill="#cd4a3b"/>
<rect x="853" y="682.59" width="31" height="10.91" fill="#cd4a3b"/>
<rect x="853" y="694.30" width="31" height="9.79" fill="#cd4a3b"/>
<rect x="853" y="704.89" width="31" height="6.20" fill="#cd4a3b"/>
<rect x="853" y="711.90" width="31" height="3.31" fill="#cd4a3b"/>
<rect x="853" y="716.00" width="31" height="17.89" fill="#cd4a3b"/>
<rect x="853" y="734.70" width="31" height="8.00" fill="#cd4a3b"/>
<rect x="853" y="743.49" width="31" height="9.18" fill="#cd4a3b"/>
<rect x="853" y="753.47" width="31" height="7.51" fill="#cd4a3b"/>
<rect x="853" y="761.79" width="31" height="6.68" fill="#cd4a3b"/>
<rect x="853" y="769.27" width="31" height="5.85" fill="#cd4a3b"/>
<rect x="853" y="775.92" width="31" height="5.02" fill="#cd4a3b"/>
<rect x="853" y="781.74" width="31" height="4.19" fill="#cd4a3b"/>
<rect x="1436" y="455" width="31" height="137.50" fill="#2d6ca0"/>
<rect x="1436" y="593.5" width="31" height="59.20" fill="#3a87c6"/>
<rect x="1436" y="653.7" width="31" height="43.60" fill="#fde0a9"/>
<rect x="1436" y="698.3" width="31" height="23.40" fill="#78b5e3"/>
<rect x="1436" y="722.7" width="31" height="13.30" fill="#f7bb7a"/>
<rect x="1436" y="737" width="31" height="3.80" fill="#ec8658"/>
<rect x="1436" y="741.8" width="31" height="40.00" fill="#cd4a3b"/>
</svg>
<svg class="b" style="left:0;top:0" width="1483" height="749">
<line x1="1047.5" y1="161" x2="1047.5" y2="383.5" stroke="#d2d2d2" stroke-width="1"/>
<line x1="1126.4" y1="161" x2="1126.4" y2="383.5" stroke="#d2d2d2" stroke-width="1"/>
<line x1="1205.4" y1="161" x2="1205.4" y2="383.5" stroke="#d2d2d2" stroke-width="1"/>
<line x1="1284.4" y1="161" x2="1284.4" y2="383.5" stroke="#d2d2d2" stroke-width="1"/>
<line x1="1363.4" y1="161" x2="1363.4" y2="383.5" stroke="#d2d2d2" stroke-width="1"/>
<line x1="1442.4" y1="161" x2="1442.4" y2="383.5" stroke="#d2d2d2" stroke-width="1"/>
<line x1="1006.5" y1="161" x2="1006.5" y2="375.5" stroke="#c8c8c8" stroke-width="1"/>
<line x1="1006" y1="375.5" x2="1483" y2="375.5" stroke="#c8c8c8" stroke-width="1"/>
<rect x="1047" y="168.0" width="410" height="12.6" fill="#e6e6e6"/>
<rect x="1047" y="194.7" width="150.79999999999995" height="12.6" fill="#e6e6e6"/>
<rect x="1047" y="221.5" width="20" height="12.6" fill="#e6e6e6"/>
<rect x="1047" y="248.1" width="24.90000000000009" height="12.6" fill="#e6e6e6"/>
<rect x="1047" y="274.9" width="66.79999999999995" height="12.6" fill="#e6e6e6"/>
<rect x="1047" y="301.7" width="18.40000000000009" height="12.6" fill="#e6e6e6"/>
<rect x="1047" y="328.4" width="44.59999999999991" height="12.6" fill="#e6e6e6"/>
<rect x="1047" y="355.4" width="16.299999999999955" height="12.6" fill="#e6e6e6"/>
<circle cx="1051.5" cy="174.3" r="4.5" fill="#ddcc77" stroke="rgba(40,40,40,0.3)" stroke-width="0.5"/>
<circle cx="1065.1" cy="174.3" r="4.5" fill="#999933" stroke="rgba(40,40,40,0.3)" stroke-width="0.5"/>
<circle cx="1054.5" cy="174.3" r="4.5" fill="#882255" stroke="rgba(40,40,40,0.3)" stroke-width="0.5"/>
<circle cx="1060.1" cy="174.3" r="4.5" fill="#6699cc" stroke="rgba(40,40,40,0.3)" stroke-width="0.5"/>
<circle cx="1073.7" cy="174.3" r="4.5" fill="#44aa99" stroke="rgba(40,40,40,0.3)" stroke-width="0.5"/>
<circle cx="1084.6" cy="174.3" r="4.5" fill="#aa4466" stroke="rgba(40,40,40,0.3)" stroke-width="0.5"/>
<circle cx="1457" cy="174.3" r="4.5" fill="#ddcc77" stroke="rgba(40,40,40,0.3)" stroke-width="0.5"/>
<circle cx="1050.5" cy="201" r="4.5" fill="#cc6677" stroke="rgba(40,40,40,0.3)" stroke-width="0.5"/>
<circle cx="1058.5" cy="201" r="4.5" fill="#44aa99" stroke="rgba(40,40,40,0.3)" stroke-width="0.5"/>
<circle cx="1052.5" cy="201" r="4.5" fill="#aa4499" stroke="rgba(40,40,40,0.3)" stroke-width="0.5"/>
<circle cx="1056.3" cy="201" r="4.5" fill="#661100" stroke="rgba(40,40,40,0.3)" stroke-width="0.5"/>
<circle cx="1135.6" cy="201" r="4.5" fill="#aa4466" stroke="rgba(40,40,40,0.3)" stroke-width="0.5"/>
<circle cx="1197.8" cy="201" r="4.5" fill="#aa4499" stroke="rgba(40,40,40,0.3)" stroke-width="0.5"/>
<circle cx="1052" cy="227.8" r="4.5" fill="#999933" stroke="rgba(40,40,40,0.3)" stroke-width="0.5"/>
<circle cx="1053.5" cy="227.8" r="4.5" fill="#cc6677" stroke="rgba(40,40,40,0.3)" stroke-width="0.5"/>
<circle cx="1058" cy="227.8" r="4.5" fill="#661100" stroke="rgba(40,40,40,0.3)" stroke-width="0.5"/>
<circle cx="1067" cy="227.8" r="4.5" fill="#aa4499" stroke="rgba(40,40,40,0.3)" stroke-width="0.5"/>
<circle cx="1050" cy="254.4" r="4.5" fill="#cc6677" stroke="rgba(40,40,40,0.3)" stroke-width="0.5"/>
<circle cx="1071.9" cy="254.4" r="4.5" fill="#cc6677" stroke="rgba(40,40,40,0.3)" stroke-width="0.5"/>
<circle cx="1069.7" cy="254.4" r="4.5" fill="#661100" stroke="rgba(40,40,40,0.3)" stroke-width="0.5"/>
<circle cx="1054.8" cy="254.4" r="4.5" fill="#332288" stroke="rgba(40,40,40,0.3)" stroke-width="0.5"/>
<circle cx="1064.4" cy="254.4" r="4.5" fill="#999933" stroke="rgba(40,40,40,0.3)" stroke-width="0.5"/>
<circle cx="1048.4" cy="281.2" r="4.5" fill="#aa4499" stroke="rgba(40,40,40,0.3)" stroke-width="0.5"/>
<circle cx="1059.6" cy="281.2" r="4.5" fill="#332288" stroke="rgba(40,40,40,0.3)" stroke-width="0.5"/>
<circle cx="1053" cy="281.2" r="4.5" fill="#661100" stroke="rgba(40,40,40,0.3)" stroke-width="0.5"/>
<circle cx="1106.4" cy="281.2" r="4.5" fill="#aa4466" stroke="rgba(40,40,40,0.3)" stroke-width="0.5"/>
<circle cx="1113.8" cy="281.2" r="4.5" fill="#aa4499" stroke="rgba(40,40,40,0.3)" stroke-width="0.5"/>
<circle cx="1060.6" cy="308" r="4.5" fill="#999933" stroke="rgba(40,40,40,0.3)" stroke-width="0.5"/>
<circle cx="1050" cy="308" r="4.5" fill="#aa4499" stroke="rgba(40,40,40,0.3)" stroke-width="0.5"/>
<circle cx="1065.4" cy="308" r="4.5" fill="#cc6677" stroke="rgba(40,40,40,0.3)" stroke-width="0.5"/>
<circle cx="1056.4" cy="308" r="4.5" fill="#882255" stroke="rgba(40,40,40,0.3)" stroke-width="0.5"/>
<circle cx="1047.6" cy="334.7" r="4.5" fill="#999933" stroke="rgba(40,40,40,0.3)" stroke-width="0.5"/>
<circle cx="1059" cy="334.7" r="4.5" fill="#117733" stroke="rgba(40,40,40,0.3)" stroke-width="0.5"/>
<circle cx="1055.8" cy="334.7" r="4.5" fill="#cc6677" stroke="rgba(40,40,40,0.3)" stroke-width="0.5"/>
<circle cx="1051.9" cy="334.7" r="4.5" fill="#661100" stroke="rgba(40,40,40,0.3)" stroke-width="0.5"/>
<circle cx="1067" cy="334.7" r="4.5" fill="#6699cc" stroke="rgba(40,40,40,0.3)" stroke-width="0.5"/>
<circle cx="1064.4" cy="334.7" r="4.5" fill="#88ccee" stroke="rgba(40,40,40,0.3)" stroke-width="0.5"/>
<circle cx="1091.6" cy="334.7" r="4.5" fill="#332288" stroke="rgba(40,40,40,0.3)" stroke-width="0.5"/>
<circle cx="1089.7" cy="334.7" r="4.5" fill="#ddcc77" stroke="rgba(40,40,40,0.3)" stroke-width="0.5"/>
<circle cx="1056.9" cy="361.7" r="4.5" fill="#661100" stroke="rgba(40,40,40,0.3)" stroke-width="0.5"/>
<circle cx="1050" cy="361.7" r="4.5" fill="#6699cc" stroke="rgba(40,40,40,0.3)" stroke-width="0.5"/>
<circle cx="1063.3" cy="361.7" r="4.5" fill="#88ccee" stroke="rgba(40,40,40,0.3)" stroke-width="0.5"/>
</svg>
<div class="t" style="left:10.30px;top:6.00px;font:normal normal 21.5px/1 'Liberation Sans', sans-serif;color:#ababab;transform:scaleX(1.0149);">Анализ Клиенти</div>
<div class="t" style="left:14.80px;top:54.15px;font:normal bold 14px/1 'Liberation Sans', sans-serif;color:#4a4a4a;transform:scaleX(0.9061);">Година</div>
<div class="t" style="left:214.80px;top:54.15px;font:normal bold 14px/1 'Liberation Sans', sans-serif;color:#4a4a4a;transform:scaleX(0.9467);">Месец</div>
<div class="t" style="left:415.80px;top:54.15px;font:normal bold 14px/1 'Liberation Sans', sans-serif;color:#4a4a4a;transform:scaleX(0.9358);">Продуктова Категория</div>
<div class="t" style="left:615.80px;top:54.15px;font:normal bold 14px/1 'Liberation Sans', sans-serif;color:#4a4a4a;transform:scaleX(0.8938);">Бранд</div>
<div class="t" style="left:815.80px;top:54.15px;font:normal bold 14px/1 'Liberation Sans', sans-serif;color:#4a4a4a;transform:scaleX(0.9407);">Продукт</div>
<div class="t" style="left:1016.80px;top:54.15px;font:normal bold 14px/1 'Liberation Sans', sans-serif;color:#4a4a4a;transform:scaleX(0.9170);">Обект</div>
<div class="t" style="left:1216.80px;top:54.15px;font:normal bold 14px/1 'Liberation Sans', sans-serif;color:#4a4a4a;transform:scaleX(0.8903);">Търговец</div>
<div class="t" style="left:1403.46px;top:51.95px;font:normal normal 14px/1 'Liberation Sans', sans-serif;color:#ffffff;transform:scaleX(0.9423);">BGN</div>
<div class="t" style="left:1445.10px;top:51.95px;font:normal normal 14px/1 'Liberation Sans', sans-serif;color:#141414;transform:scaleX(0.8964);">EUR</div>
<div class="t" style="left:89.00px;top:140.61px;font:normal normal 17px/1 'Liberation Sans', sans-serif;color:#626262;transform:scaleX(0.9775);">GWP MtD</div>
<div class="t" style="left:15.98px;top:164.70px;font:normal normal 43px/1 'Liberation Sans', sans-serif;color:#c9493b;transform:scaleX(0.9728);">1.32M</div>
<div class="t" style="left:151.59px;top:169.87px;font:normal normal 20px/1 'Liberation Sans', sans-serif;color:#4a7ab0;transform:scaleX(1.0088);">6.72M</div>
<div class="t" style="left:152.00px;top:194.99px;font:normal normal 11px/1 'Liberation Sans', sans-serif;color:#666666;transform:scaleX(0.9578);">Продажби PYMtD</div>
<div class="t" style="left:6.40px;top:231.29px;font:italic normal 12.3px/1 'Liberation Sans', sans-serif;color:#767676;">Изменение: =-80.43%</div>
<div class="t" style="left:360.00px;top:140.92px;font:normal normal 19px/1 'Liberation Sans', sans-serif;color:#626262;">GWP YtD</div>
<div class="t" style="left:284.87px;top:167.15px;font:normal normal 42px/1 'Liberation Sans', sans-serif;color:#3a8a36;transform:scaleX(0.9637);">60.13M</div>
<div class="t" style="left:440.30px;top:172.42px;font:normal normal 19px/1 'Liberation Sans', sans-serif;color:#4a7ab0;">57.77M</div>
<div class="t" style="left:439.80px;top:196.99px;font:normal normal 11px/1 'Liberation Sans', sans-serif;color:#666666;transform:scaleX(0.9489);">Продажби PYtD</div>
<div class="t" style="left:259.40px;top:231.09px;font:italic normal 12.3px/1 'Liberation Sans', sans-serif;color:#767676;">Изменение: =4.09%</div>
<div class="t" style="left:586.30px;top:143.93px;font:normal normal 16.5px/1 'Liberation Sans', sans-serif;color:#626262;transform:scaleX(1.0364);">Активни Клиенти MTD</div>
<div class="t" style="left:591.68px;top:170.40px;font:normal normal 56px/1 'Liberation Sans', sans-serif;color:#4a7ab0;transform:scaleX(1.0078);">79</div>
<div class="t" style="left:657.59px;top:181.62px;font:normal normal 21px/1 'Liberation Sans', sans-serif;color:#4a7ab0;transform:scaleX(1.0102);">15</div>
<div class="t" style="left:656.30px;top:208.89px;font:normal normal 11px/1 'Liberation Sans', sans-serif;color:#666666;transform:scaleX(0.9550);">Активни Обекти MTD</div>
<div class="t" style="left:15.70px;top:257.03px;font:normal bold 16.5px/1 'Liberation Sans', sans-serif;color:#727272;transform:scaleX(0.9175);">Сключени полици по клиенти</div>
<div class="t" style="left:20.90px;top:303.64px;font:normal bold 12px/1 'Liberation Sans', sans-serif;color:#4a4a4a;">Клиент</div>
<div class="t" style="left:106.90px;top:303.64px;font:normal bold 12px/1 'Liberation Sans', sans-serif;color:#4a4a4a;">Продуктова Кат...</div>
<div class="t" style="left:261.90px;top:303.64px;font:normal bold 12px/1 'Liberation Sans', sans-serif;color:#4a4a4a;">Бранд</div>
<div class="t" style="left:20.90px;top:336.64px;font:normal bold 12px/1 'Liberation Sans', sans-serif;color:#4a4a4a;">Продукт</div>
<div class="t" style="left:114.90px;top:336.64px;font:normal bold 12px/1 'Liberation Sans', sans-serif;color:#4a4a4a;">Търговец</div>
<div class="t" style="left:212.90px;top:336.64px;font:normal bold 12px/1 'Liberation Sans', sans-serif;color:#4a4a4a;">Вид Промоция</div>
<div class="t" style="left:362.00px;top:303.84px;font:normal bold 12px/1 'Liberation Sans', sans-serif;color:#4a4a4a;">Values</div>
<div class="t" style="left:370.70px;top:378.24px;font:normal normal 12px/1 'Liberation Sans', sans-serif;color:#595959;transform:scaleX(1.0734);">Продажби Кол-во</div>
<div class="t" style="left:526.70px;top:378.24px;font:normal normal 12px/1 'Liberation Sans', sans-serif;color:#595959;transform:scaleX(1.0539);">Продажби Ст-ст</div>
<div class="t" style="left:703.00px;top:378.24px;font:normal normal 12px/1 'Liberation Sans', sans-serif;color:#595959;transform:scaleX(0.9773);">Марж %</div>
<div class="t" style="left:10.10px;top:409.64px;font:normal bold 12px/1 'Liberation Sans', sans-serif;color:#404040;">Totals</div>
<div class="t" style="left:414.29px;top:410.22px;font:normal bold 12.5px/1 'Liberation Sans', sans-serif;color:#404040;transform:scaleX(1.0950);">110,718,656</div>
<div class="t" style="left:545.76px;top:410.22px;font:normal bold 12.5px/1 'Liberation Sans', sans-serif;color:#404040;transform:scaleX(1.0950);">197,625,191.11</div>
<div class="t" style="left:755.28px;top:410.22px;font:normal bold 12.5px/1 'Liberation Sans', sans-serif;color:#ea7d5b;transform:scaleX(0.9600);">38.1%</div>
<div class="t" style="left:34.40px;top:430.74px;font:normal bold 12px/1 'Liberation Sans', sans-serif;color:#404040;">ATM</div>
<div class="t" style="left:421.14px;top:431.32px;font:normal bold 12.5px/1 'Liberation Sans', sans-serif;color:#404040;transform:scaleX(1.0950);">20,407,851</div>
<div class="t" style="left:552.62px;top:431.32px;font:normal bold 12.5px/1 'Liberation Sans', sans-serif;color:#404040;transform:scaleX(1.0950);">47,543,806.41</div>
<div class="t" style="left:755.28px;top:431.32px;font:normal bold 12.5px/1 'Liberation Sans', sans-serif;color:#0d7a17;transform:scaleX(0.9600);">40.6%</div>
<div class="t" style="left:34.40px;top:453.04px;font:normal bold 12px/1 'Liberation Sans', sans-serif;color:#404040;">Diversity</div>
<div class="t" style="left:421.14px;top:453.62px;font:normal bold 12.5px/1 'Liberation Sans', sans-serif;color:#404040;transform:scaleX(1.0950);">12,355,327</div>
<div class="t" style="left:553.37px;top:453.62px;font:normal bold 12.5px/1 'Liberation Sans', sans-serif;color:#404040;transform:scaleX(1.0950);">27,115,382.82</div>
<div class="t" style="left:755.28px;top:453.62px;font:normal bold 12.5px/1 'Liberation Sans', sans-serif;color:#ea7d5b;transform:scaleX(0.9600);">37.7%</div>
<div class="t" style="left:34.40px;top:475.34px;font:normal bold 12px/1 'Liberation Sans', sans-serif;color:#404040;">Lago Ltd.</div>
<div class="t" style="left:421.90px;top:475.92px;font:normal bold 12.5px/1 'Liberation Sans', sans-serif;color:#404040;transform:scaleX(1.0950);">11,434,880</div>
<div class="t" style="left:552.62px;top:475.92px;font:normal bold 12.5px/1 'Liberation Sans', sans-serif;color:#404040;transform:scaleX(1.0950);">18,995,858.91</div>
<div class="t" style="left:755.28px;top:475.92px;font:normal bold 12.5px/1 'Liberation Sans', sans-serif;color:#ea7d5b;transform:scaleX(0.9600);">36.2%</div>
<div class="t" style="left:34.40px;top:497.64px;font:normal bold 12px/1 'Liberation Sans', sans-serif;color:#404040;">Macron Trade</div>
<div class="t" style="left:421.14px;top:498.22px;font:normal bold 12.5px/1 'Liberation Sans', sans-serif;color:#404040;transform:scaleX(1.0950);">10,586,560</div>
<div class="t" style="left:552.62px;top:498.22px;font:normal bold 12.5px/1 'Liberation Sans', sans-serif;color:#404040;transform:scaleX(1.0950);">17,709,125.55</div>
<div class="t" style="left:755.28px;top:498.22px;font:normal bold 12.5px/1 'Liberation Sans', sans-serif;color:#0d7a17;transform:scaleX(0.9600);">40.0%</div>
<div class="t" style="left:34.40px;top:519.94px;font:normal bold 12px/1 'Liberation Sans', sans-serif;color:#404040;">Prima Agency</div>
<div class="t" style="left:428.76px;top:520.52px;font:normal bold 12.5px/1 'Liberation Sans', sans-serif;color:#404040;transform:scaleX(1.0950);">5,748,378</div>
<div class="t" style="left:552.62px;top:520.52px;font:normal bold 12.5px/1 'Liberation Sans', sans-serif;color:#404040;transform:scaleX(1.0950);">13,364,355.52</div>
<div class="t" style="left:755.28px;top:520.52px;font:normal bold 12.5px/1 'Liberation Sans', sans-serif;color:#ea7d5b;transform:scaleX(0.9600);">32.4%</div>
<div class="t" style="left:34.40px;top:542.24px;font:normal bold 12px/1 'Liberation Sans', sans-serif;color:#404040;">Елсис ООД</div>
<div class="t" style="left:428.76px;top:542.82px;font:normal bold 12.5px/1 'Liberation Sans', sans-serif;color:#404040;transform:scaleX(1.0950);">6,739,404</div>
<div class="t" style="left:553.37px;top:542.82px;font:normal bold 12.5px/1 'Liberation Sans', sans-serif;color:#404040;transform:scaleX(1.0950);">11,524,304.01</div>
<div class="t" style="left:755.28px;top:542.82px;font:normal bold 12.5px/1 'Liberation Sans', sans-serif;color:#ea7d5b;transform:scaleX(0.9600);">35.6%</div>
<div class="t" style="left:34.40px;top:564.54px;font:normal bold 12px/1 'Liberation Sans', sans-serif;color:#404040;">Damler</div>
<div class="t" style="left:421.14px;top:565.12px;font:normal bold 12.5px/1 'Liberation Sans', sans-serif;color:#404040;transform:scaleX(1.0950);">13,053,489</div>
<div class="t" style="left:552.62px;top:565.12px;font:normal bold 12.5px/1 'Liberation Sans', sans-serif;color:#404040;transform:scaleX(1.0950);">10,794,744.76</div>
<div class="t" style="left:755.28px;top:565.12px;font:normal bold 12.5px/1 'Liberation Sans', sans-serif;color:#0d7a17;transform:scaleX(0.9600);">47.4%</div>
<div class="t" style="left:34.40px;top:586.84px;font:normal bold 12px/1 'Liberation Sans', sans-serif;color:#404040;">Лазара ЕООД</div>
<div class="t" style="left:428.76px;top:587.42px;font:normal bold 12.5px/1 'Liberation Sans', sans-serif;color:#404040;transform:scaleX(1.0950);">3,690,062</div>
<div class="t" style="left:560.98px;top:587.42px;font:normal bold 12.5px/1 'Liberation Sans', sans-serif;color:#404040;transform:scaleX(1.0950);">6,441,824.11</div>
<div class="t" style="left:755.28px;top:587.42px;font:normal bold 12.5px/1 'Liberation Sans', sans-serif;color:#ea7d5b;transform:scaleX(0.9600);">35.9%</div>
<div class="t" style="left:34.40px;top:609.14px;font:normal bold 12px/1 'Liberation Sans', sans-serif;color:#404040;">Bio World</div>
<div class="t" style="left:428.76px;top:609.72px;font:normal bold 12.5px/1 'Liberation Sans', sans-serif;color:#404040;transform:scaleX(1.0950);">3,301,350</div>
<div class="t" style="left:560.23px;top:609.72px;font:normal bold 12.5px/1 'Liberation Sans', sans-serif;color:#404040;transform:scaleX(1.0950);">6,362,363.31</div>
<div class="t" style="left:755.28px;top:609.72px;font:normal bold 12.5px/1 'Liberation Sans', sans-serif;color:#ea7d5b;transform:scaleX(0.9600);">34.4%</div>
<div class="t" style="left:34.40px;top:631.44px;font:normal bold 12px/1 'Liberation Sans', sans-serif;color:#404040;">Калория ООД</div>
<div class="t" style="left:428.76px;top:632.02px;font:normal bold 12.5px/1 'Liberation Sans', sans-serif;color:#404040;transform:scaleX(1.0950);">2,015,555</div>
<div class="t" style="left:560.23px;top:632.02px;font:normal bold 12.5px/1 'Liberation Sans', sans-serif;color:#404040;transform:scaleX(1.0950);">5,267,454.36</div>
<div class="t" style="left:755.28px;top:632.02px;font:normal bold 12.5px/1 'Liberation Sans', sans-serif;color:#ea7d5b;transform:scaleX(0.9600);">32.4%</div>
<div class="t" style="left:34.40px;top:653.74px;font:normal bold 12px/1 'Liberation Sans', sans-serif;color:#404040;">Leon</div>
<div class="t" style="left:428.76px;top:654.32px;font:normal bold 12.5px/1 'Liberation Sans', sans-serif;color:#404040;transform:scaleX(1.0950);">1,458,343</div>
<div class="t" style="left:560.23px;top:654.32px;font:normal bold 12.5px/1 'Liberation Sans', sans-serif;color:#404040;transform:scaleX(1.0950);">4,370,014.53</div>
<div class="t" style="left:755.28px;top:654.32px;font:normal bold 12.5px/1 'Liberation Sans', sans-serif;color:#0d7a17;transform:scaleX(0.9600);">46.6%</div>
<div class="t" style="left:34.40px;top:676.04px;font:normal bold 12px/1 'Liberation Sans', sans-serif;color:#404040;">PMB and Co.</div>
<div class="t" style="left:428.76px;top:676.62px;font:normal bold 12.5px/1 'Liberation Sans', sans-serif;color:#404040;transform:scaleX(1.0950);">3,533,323</div>
<div class="t" style="left:560.23px;top:676.62px;font:normal bold 12.5px/1 'Liberation Sans', sans-serif;color:#404040;transform:scaleX(1.0950);">3,120,731.67</div>
<div class="t" style="left:755.28px;top:676.62px;font:normal bold 12.5px/1 'Liberation Sans', sans-serif;color:#a3173a;transform:scaleX(0.9600);">28.1%</div>
<div class="t" style="left:34.40px;top:698.34px;font:normal bold 12px/1 'Liberation Sans', sans-serif;color:#404040;">Sangra</div>
<div class="t" style="left:428.76px;top:698.92px;font:normal bold 12.5px/1 'Liberation Sans', sans-serif;color:#404040;transform:scaleX(1.0950);">1,102,441</div>
<div class="t" style="left:560.23px;top:698.92px;font:normal bold 12.5px/1 'Liberation Sans', sans-serif;color:#404040;transform:scaleX(1.0950);">2,439,108.79</div>
<div class="t" style="left:755.28px;top:698.92px;font:normal bold 12.5px/1 'Liberation Sans', sans-serif;color:#0d7a17;transform:scaleX(0.9600);">42.9%</div>
<div class="t" style="left:34.40px;top:720.64px;font:normal bold 12px/1 'Liberation Sans', sans-serif;color:#404040;">Vialis</div>
<div class="t" style="left:429.51px;top:721.22px;font:normal bold 12.5px/1 'Liberation Sans', sans-serif;color:#404040;transform:scaleX(1.0950);">1,115,621</div>
<div class="t" style="left:561.74px;top:721.22px;font:normal bold 12.5px/1 'Liberation Sans', sans-serif;color:#404040;transform:scaleX(1.0950);">2,111,255.05</div>
<div class="t" style="left:755.28px;top:721.22px;font:normal bold 12.5px/1 'Liberation Sans', sans-serif;color:#0d7a17;transform:scaleX(0.9600);">40.5%</div>
<div class="t" style="left:34.40px;top:742.94px;font:normal bold 12px/1 'Liberation Sans', sans-serif;color:#404040;">International Medical Care</div>
<div class="t" style="left:429.51px;top:743.52px;font:normal bold 12.5px/1 'Liberation Sans', sans-serif;color:#404040;transform:scaleX(1.0950);">1,011,500</div>
<div class="t" style="left:560.23px;top:743.52px;font:normal bold 12.5px/1 'Liberation Sans', sans-serif;color:#404040;transform:scaleX(1.0950);">1,742,081.50</div>
<div class="t" style="left:755.28px;top:743.52px;font:normal bold 12.5px/1 'Liberation Sans', sans-serif;color:#ea7d5b;transform:scaleX(0.9600);">31.0%</div>
<div class="t" style="left:849.60px;top:133.30px;font:normal bold 15px/1 'Liberation Sans', sans-serif;color:#666666;transform:scaleX(0.9894);">Топ Брокери и Продукти</div>
<div class="t" style="left:1044.25px;top:395.17px;font:normal normal 11.5px/1 'Liberation Sans', sans-serif;color:#626262;transform:scaleX(1.0163);">0</div>
<div class="t" style="left:1118.25px;top:395.17px;font:normal normal 11.5px/1 'Liberation Sans', sans-serif;color:#626262;transform:scaleX(1.0203);">5M</div>
<div class="t" style="left:1193.90px;top:395.17px;font:normal normal 11.5px/1 'Liberation Sans', sans-serif;color:#626262;transform:scaleX(1.0281);">10M</div>
<div class="t" style="left:1272.90px;top:395.17px;font:normal normal 11.5px/1 'Liberation Sans', sans-serif;color:#626262;transform:scaleX(1.0281);">15M</div>
<div class="t" style="left:1351.90px;top:395.17px;font:normal normal 11.5px/1 'Liberation Sans', sans-serif;color:#626262;transform:scaleX(1.0281);">20M</div>
<div class="t" style="left:1430.10px;top:395.17px;font:normal normal 11.5px/1 'Liberation Sans', sans-serif;color:#626262;transform:scaleX(1.0996);">25M</div>
<div class="t" style="left:977.89px;top:166.68px;font:normal normal 11.6px/1 'Liberation Sans', sans-serif;color:#595959;">ATM</div>
<div class="t" style="left:957.06px;top:193.38px;font:normal normal 11.6px/1 'Liberation Sans', sans-serif;color:#595959;">Diversity</div>
<div class="t" style="left:953.15px;top:220.18px;font:normal normal 11.6px/1 'Liberation Sans', sans-serif;color:#595959;">Lago Ltd.</div>
<div class="t" style="left:929.76px;top:246.78px;font:normal normal 11.6px/1 'Liberation Sans', sans-serif;color:#595959;">Macron Trade</div>
<div class="t" style="left:929.33px;top:273.58px;font:normal normal 11.6px/1 'Liberation Sans', sans-serif;color:#595959;">Prima Agency</div>
<div class="t" style="left:940.08px;top:300.38px;font:normal normal 11.6px/1 'Liberation Sans', sans-serif;color:#595959;">Елсис ООД</div>
<div class="t" style="left:964.14px;top:327.08px;font:normal normal 11.6px/1 'Liberation Sans', sans-serif;color:#595959;">Damler</div>
<div class="t" style="left:926.33px;top:354.08px;font:normal normal 11.6px/1 'Liberation Sans', sans-serif;color:#595959;">Лазара ЕООД</div>
<div class="t" style="left:853.80px;top:430.78px;font:normal normal 15.5px/1 'Liberation Sans', sans-serif;color:#666666;transform:scaleX(1.0214);">Клиент</div>
<div class="t" style="left:1300.60px;top:431.08px;font:normal normal 15.5px/1 'Liberation Sans', sans-serif;color:#666666;transform:scaleX(1.0300);">Продуктова Категория</div>
<div class="t" style="left:892.30px;top:479.59px;font:normal normal 12.3px/1 'Liberation Sans', sans-serif;color:#404040;transform:scaleX(0.9743);">ATM</div>
<div class="t" style="left:892.30px;top:501.59px;font:normal normal 12.3px/1 'Liberation Sans', sans-serif;color:#404040;transform:scaleX(1.0435);">47.54M</div>
<div class="t" style="left:892.30px;top:543.09px;font:normal normal 12.3px/1 'Liberation Sans', sans-serif;color:#404040;transform:scaleX(1.0416);">Diversity</div>
<div class="t" style="left:892.30px;top:588.59px;font:normal normal 12.3px/1 'Liberation Sans', sans-serif;color:#404040;transform:scaleX(1.0101);">Lago Ltd.</div>
<div class="t" style="left:892.30px;top:642.59px;font:normal normal 12.3px/1 'Liberation Sans', sans-serif;color:#404040;transform:scaleX(1.0054);">Macron Trade</div>
<div class="t" style="left:1328.00px;top:509.59px;font:normal normal 12.3px/1 'Liberation Sans', sans-serif;color:#404040;transform:scaleX(1.0294);">Храни и Напитки</div>
<div class="t" style="left:1383.50px;top:530.99px;font:normal normal 12.3px/1 'Liberation Sans', sans-serif;color:#404040;transform:scaleX(1.0654);">82.68M</div>
<div class="t" style="left:1288.10px;top:608.69px;font:normal normal 12.3px/1 'Liberation Sans', sans-serif;color:#404040;transform:scaleX(1.0423);">Козметика и Аксесоари</div>
<div class="t" style="left:1383.70px;top:630.49px;font:normal normal 12.3px/1 'Liberation Sans', sans-serif;color:#404040;transform:scaleX(1.0606);">35.43M</div>
<div class="t" style="left:1340.80px;top:661.79px;font:normal normal 12.3px/1 'Liberation Sans', sans-serif;color:#404040;transform:scaleX(1.0350);">БИО Продукти</div>
<div class="t" style="left:855.1px;top:287px;font:11.5px/1 &quot;Liberation Sans&quot;,sans-serif;color:#6a6a6a;transform:rotate(-90deg);">Клиент</div>
</body></html>
